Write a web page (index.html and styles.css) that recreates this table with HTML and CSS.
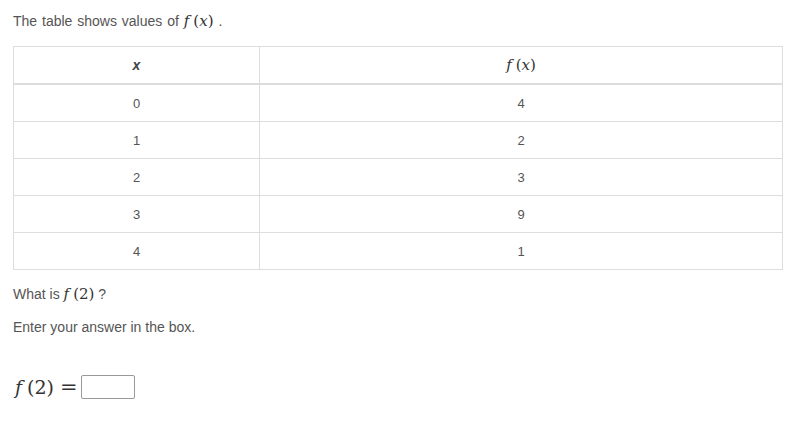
FILE: index.html
```html
<!DOCTYPE html>
<html>
<head>
<meta charset="utf-8">
<link rel="stylesheet" href="styles.css">
</head>
<body>
<div class="page">
  <p class="intro">The table shows values of <span class="math"><i class="fn">f</i><span class="par">(<i>x</i>)</span></span> .</p>
  <table class="values">
    <thead>
      <tr><th class="hx">x</th><th><span class="math"><i class="fn">f</i><span class="par">(<i>x</i>)</span></span></th></tr>
    </thead>
    <tbody>
      <tr><td>0</td><td>4</td></tr>
      <tr><td>1</td><td>2</td></tr>
      <tr><td>2</td><td>3</td></tr>
      <tr><td>3</td><td>9</td></tr>
      <tr><td>4</td><td>1</td></tr>
    </tbody>
  </table>
  <p class="q">What is <span class="math"><i class="fn">f</i><span class="par">(2)</span></span> ?</p>
  <p class="enter">Enter your answer in the box.</p>
  <div class="answer">
    <span class="math big"><i class="fn">f</i><span class="par">(2)</span><span class="eq">=</span></span><span class="box"></span>
  </div>
</div>
</body>
</html>
```
FILE: styles.css
```css
html, body { margin: 0; padding: 0; background: #fff; }
body {
  font-family: "Liberation Sans", Arial, sans-serif;
  font-size: 14px;
  color: #555;
}
.page { padding: 11px 13px 0 13px; }
p { margin: 0; }
.intro { line-height: 20px; word-spacing: 1px; }
.math {
  font-family: "DejaVu Serif", "Liberation Serif", serif;
  font-size: 15px;
  color: #333;
  word-spacing: 0;
}
.math i { font-style: italic; }
.fn { margin-right: 4px; }
.values {
  margin-top: 15px;
  width: 770px;
  border-collapse: collapse;
  table-layout: fixed;
}
.values th, .values td {
  border: 1px solid #ddd;
  text-align: center;
  height: 36px;
  padding: 0;
  font-weight: normal;
  font-size: 13px;
}
.values th { border-bottom: 2px solid #ddd; height: 36px; }
.values th:first-child, .values td:first-child { width: 245px; }
.values th .math { font-size: 15px; }
.hx { font-style: italic; font-weight: bold !important; color: #444; font-size: 14px !important; }
.q { margin-top: 14px; line-height: 20px; }
.enter { margin-top: 13px; line-height: 20px; }
.answer {
  margin-top: 37px;
  display: flex;
  align-items: center;
}
.big { font-size: 19px; margin-left: 2px; }
.big .fn { margin-right: 5px; }
.eq { font-style: normal; margin-left: 6px; font-size: 21px; }
.box {
  display: inline-block;
  width: 52px;
  height: 22px;
  margin-top: 1px;
  border: 1px solid #999;
  border-radius: 2px;
  margin-left: 3px;
}
```
